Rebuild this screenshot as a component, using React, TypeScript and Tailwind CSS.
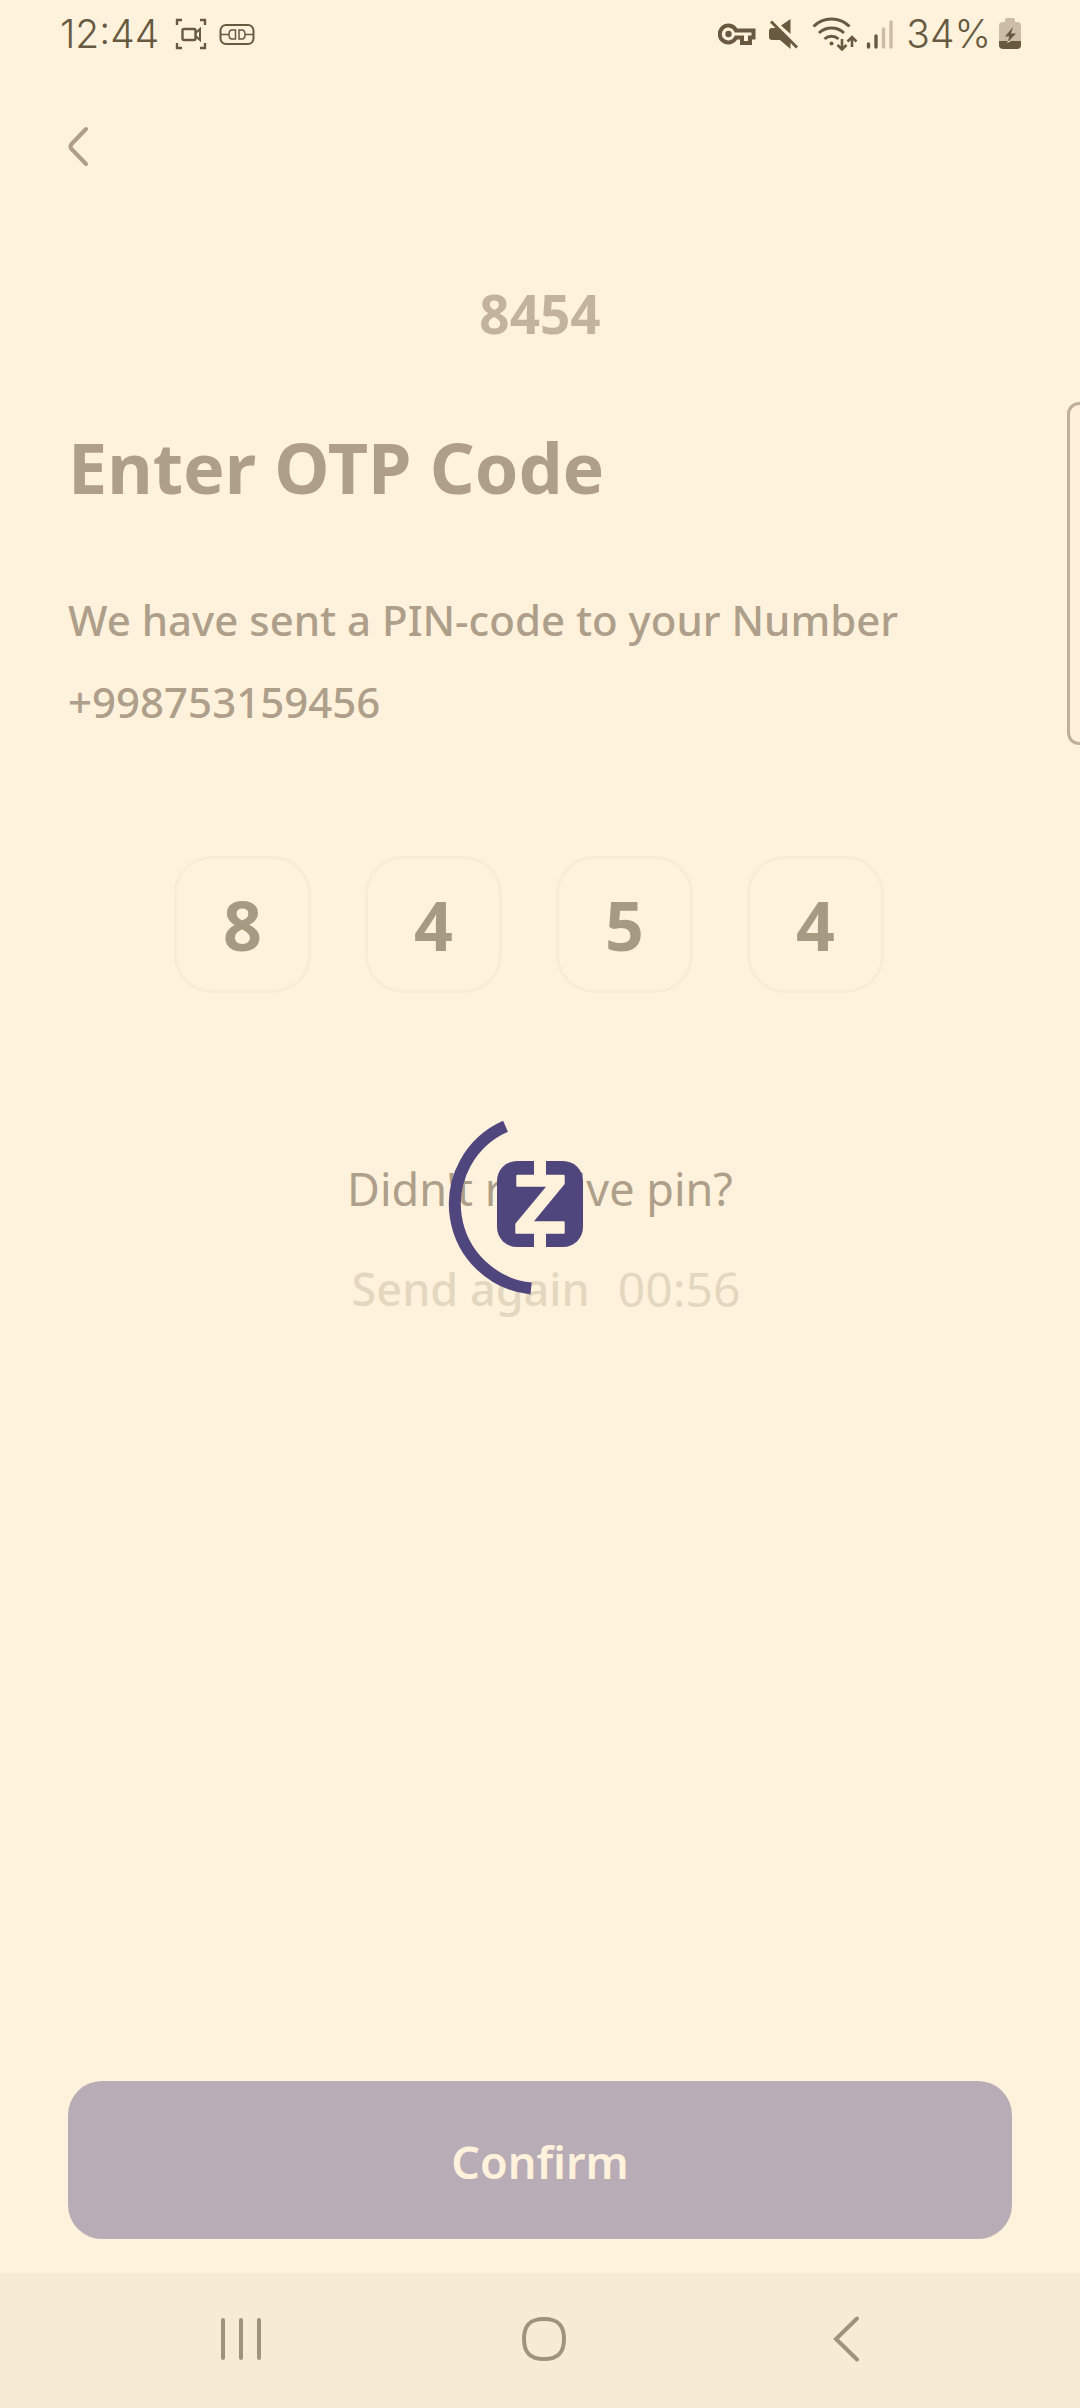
import { useState } from "react";

function StatusBar() {
  return (
    <header className="flex h-[68px] items-center justify-between pr-[59px] pl-[60px] font-[Inter,sans-serif] text-[39px] font-light text-[#675a41]">
      <div className="flex items-center">
        <time>12:44</time>
        <svg className="ml-4 size-8" viewBox="0 0 32 32" fill="none" stroke="currentColor" strokeWidth="2.4" aria-hidden="true">
          <path d="M2 7V2h5M25 2h5v5M30 25v5h-5M7 30H2v-5" />
          <rect x="7.5" y="11" width="13" height="11" rx="1.5" />
          <path d="m20.500 15 4.500-4v11l-4.500-4" strokeWidth="2" />
        </svg>
        <svg className="ml-3 h-6 w-9" viewBox="0 0 36 24" fill="none" stroke="currentColor" strokeWidth="2" aria-hidden="true">
          <rect x="1.500" y="3" width="33" height="19" rx="5.500" />
          <path d="M2 12.500h8M26 12.500h8M16.500 8H13c-2 0-3 2-3 4.500S11 17 13 17h3.500zM20 8h3c2 0 3 2 3 4.500S25 17 23 17h-3z" strokeWidth="1.500" />
        </svg>
      </div>
      <div className="flex items-center">
        <svg className="h-6 w-[38px]" viewBox="0 0 38 24" fill="none" stroke="currentColor" strokeWidth="4" aria-hidden="true">
          <path d="M18 8.500A8.500 8.500 0 1 0 18 15.500h6V21h8v-5.500h3.500v-7z" />
          <circle cx="10.500" cy="12" r="3.200" fill="currentColor" stroke="none" />
        </svg>
        <svg className="ml-3 size-8" viewBox="0 0 32 32" aria-hidden="true">
          <path d="M13 7.500 22.500 1v15zM1 13c0-2 1-3 3-3h4l14.500 14v7L12 22H4c-2 0-3-1-3-3z" fill="currentColor" />
          <path d="m3 3.500 26 26" stroke="currentColor" strokeWidth="3" />
        </svg>
        <svg className="ml-3 h-9 w-[46px]" viewBox="0 0 46 36" fill="none" stroke="currentColor" strokeWidth="3" aria-hidden="true">
          <path d="M1.500 10.500a25.500 25.500 0 0 1 36 0M7 17a18 18 0 0 1 25 0M12.500 23a10.500 10.500 0 0 1 14 0" />
          <circle cx="19.500" cy="27.500" r="2" fill="currentColor" stroke="none" />
          <path d="M30 23v10M25.500 29l4.500 4.500 4.500-4.500M40 31V21.500M35.500 25.500 40 21l4.500 4.500" strokeWidth="2.600" />
        </svg>
        <svg className="ml-2 h-8 w-7" viewBox="0 0 28 32" fill="none" stroke="currentColor" strokeWidth="3.400" strokeLinecap="round" aria-hidden="true">
          <path d="M2.500 26v3M10 18v11" />
          <path d="M17.500 11v18M25 4v25" opacity=".35" />
        </svg>
        <span className="ml-3">34%</span>
        <svg className="ml-2 h-8 w-[22px]" viewBox="0 0 22 32" aria-hidden="true">
          <path d="M6 2q0-2 2-2h6q2 0 2 2v2h2q4 0 4 4v15H0V8q0-4 4-4h2z" fill="currentColor" opacity=".35" />
          <path d="M0 23h22v4q0 4-4 4H4q-4 0-4-4z" fill="currentColor" />
          <path d="M14 9 6 18.500h4.500L8 25l9-9.500h-5z" fill="currentColor" />
          <path d="m8 25 1-2h3z" fill="#fff2dc" />
        </svg>
      </div>
    </header>
  );
}

function Loader() {
  return (
    <div role="status" aria-label="Loading" className="pointer-events-none absolute inset-0 flex items-center justify-center">
      <svg className="size-[184px]" viewBox="0 0 184 184" aria-hidden="true">
        <path d="M57.500 14.200A85 85 0 0 0 83.100 176.500" fill="none" stroke="#4f467d" strokeWidth="12" />
        <g transform="translate(49 49)">
          <rect width="86" height="86" rx="20" fill="#4f467d" />
          <path
            d="M37 0h12v13.700h17.700q1 0 1 1V23L37 60.300h29.700q1 0 1 1v10.400q0 1-1 1H49V86H37V72.700H19.300q-1 0-1-1v-9L49 25.700H20.300q-1 0-1-1v-10q0-1 1-1H37z"
            fill="#fff2dc"
          />
        </g>
      </svg>
    </div>
  );
}

export default function App() {
  const [pin, setPin] = useState(["8", "4", "5", "4"]);
  return (
    <div className="relative flex min-h-screen flex-col overflow-hidden bg-[#fff2dc] font-['Noto_Sans',sans-serif] text-[#ae9f8a]">
      <StatusBar />
      <main className="flex flex-1 flex-col px-[68px] pb-[34px]">
        <button type="button" aria-label="Back" className="mt-[54px] flex h-12 w-12 items-center">
          <svg className="h-10 w-5" viewBox="0 0 20 40" fill="none" stroke="currentColor" strokeWidth="4" strokeLinecap="round" aria-hidden="true">
            <path d="M18 3 4 17.500q-3 3 0 6L18 38" />
          </svg>
        </button>
        <p className="mt-[109px] text-center text-[53px] leading-[70px] font-bold text-[#c2b39e]">8454</p>
        <h1 className="mt-[68px] text-[70px] leading-[100px] font-bold">Enter OTP Code</h1>
        <p className="mt-[62px] text-[42px] leading-[82px] font-medium">
          We have sent a PIN-code to your Number
          <br />
          +998753159456
        </p>
        <form className="mt-[113px] flex justify-center gap-[54px] pr-[22px]">
          {pin.map((digit, i) => (
            <input
              key={i}
              aria-label={`Digit ${i + 1}`}
              inputMode="numeric"
              maxLength={1}
              value={digit}
              onChange={(e) => setPin(pin.map((d, n) => (n === i ? e.target.value : d)))}
              className="size-[137px] rounded-[38px] border-3 border-[#f9ecd6] bg-transparent text-center text-[68px] leading-[100px] font-bold text-[#a79a82]"
            />
          ))}
        </form>
        <section className="mt-[156px] flex flex-col items-center text-[45px] leading-[80px]">
          <p>Didn't receive pin?</p>
          <div className="mt-5 flex items-center gap-7 pl-3 text-[#e4d7c0]">
            <button type="button" className="font-medium">Send again</button>
            <time className="text-[48px]">00:56</time>
          </div>
        </section>
        <button type="button" className="mt-auto h-[158px] rounded-[34px] bg-[#b8acb6] pt-1 text-[45px] font-semibold text-[#fff2dc]">
          Confirm
        </button>
      </main>
      <nav className="grid h-[135px] grid-cols-3 items-center bg-[#f7ebd6] pr-[82px] pb-1 pl-[90px] text-[#a0937b]">
        <button type="button" aria-label="Recent apps" className="flex justify-center">
          <svg className="size-11" viewBox="0 0 44 44" fill="none" stroke="currentColor" strokeWidth="4" strokeLinecap="round" aria-hidden="true">
            <path d="M4 3v38M22 3v38M40 3v38" />
          </svg>
        </button>
        <button type="button" aria-label="Home" className="flex justify-center">
          <svg className="size-11" viewBox="0 0 44 44" fill="none" stroke="currentColor" strokeWidth="4" aria-hidden="true">
            <path d="M22 2C36 2 42 8 42 22S36 42 22 42 2 36 2 22 8 2 22 2Z" />
          </svg>
        </button>
        <button type="button" aria-label="Navigate back" className="flex justify-center">
          <svg className="size-12" viewBox="0 0 48 48" fill="none" stroke="currentColor" strokeWidth="4" strokeLinecap="round" aria-hidden="true">
            <path d="M34 3.500 13 24l21 20.500" />
          </svg>
        </button>
      </nav>
      <aside aria-label="Edge panel" className="absolute top-[402px] -right-1 h-[343px] w-[17px] rounded-l-xl border-3 border-r-0 border-[#beb09a] bg-[#fef0db]" />
      <Loader />
    </div>
  );
}
